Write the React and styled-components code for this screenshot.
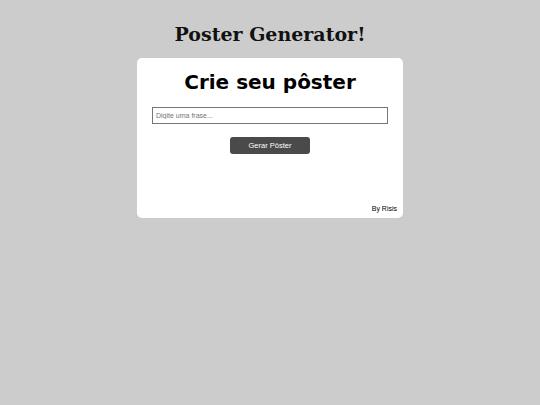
import React, { useState } from "react";
import styled, { createGlobalStyle } from "styled-components";

const GlobalStyle = createGlobalStyle`
  body {
    margin: 0;
    background: #cccccc;
    font-family: "Liberation Sans", Arial, sans-serif;
  }
`;

const Page = styled.div`
  display: flex;
  flex-direction: column;
  align-items: center;
  padding-top: 21px;
`;

const Title = styled.h1`
  font-family: "DejaVu Serif", Georgia, serif;
  font-weight: bold;
  font-size: 19px;
  color: #111;
  margin: 0 0 11px 0;
  line-height: 26px;
`;

const Card = styled.div`
  width: 266px;
  height: 160px;
  box-sizing: border-box;
  background: #fff;
  border-radius: 5px;
  padding: 10px 15px 6px;
  display: flex;
  flex-direction: column;
  align-items: center;
`;

const Heading = styled.h2`
  font-family: "DejaVu Sans", Verdana, sans-serif;
  font-weight: bold;
  font-size: 20px;
  line-height: 28px;
  margin: 0 0 11px 0;
  color: #000;
`;

const PhraseInput = styled.input`
  width: 236px;
  height: 17px;
  box-sizing: border-box;
  border: 1px solid #767676;
  padding: 0 3px;
  font-size: 7px;
  font-family: "Liberation Sans", Arial, sans-serif;
  outline: none;
  &::placeholder {
    color: #757575;
  }
`;

const Button = styled.button`
  margin-top: 13px;
  width: 80px;
  height: 17px;
  background: #4a4a4a;
  color: #fff;
  border: none;
  border-radius: 3px;
  font-size: 7.5px;
  font-family: "Liberation Sans", Arial, sans-serif;
  cursor: pointer;
`;

const Footer = styled.div`
  margin-top: auto;
  align-self: flex-end;
  margin-right: -9px;
  font-size: 7px;
  color: #000;
`;

export default function App() {
  const [phrase, setPhrase] = useState("");
  return (
    <Page>
      <GlobalStyle />
      <Title>Poster Generator!</Title>
      <Card>
        <Heading>Crie seu pôster</Heading>
        <PhraseInput
          type="text"
          placeholder="Digite uma frase..."
          value={phrase}
          onChange={e => setPhrase(e.target.value)}
        />
        <Button>Gerar Pôster</Button>
        <Footer>By Risis</Footer>
      </Card>
    </Page>
  );
}
